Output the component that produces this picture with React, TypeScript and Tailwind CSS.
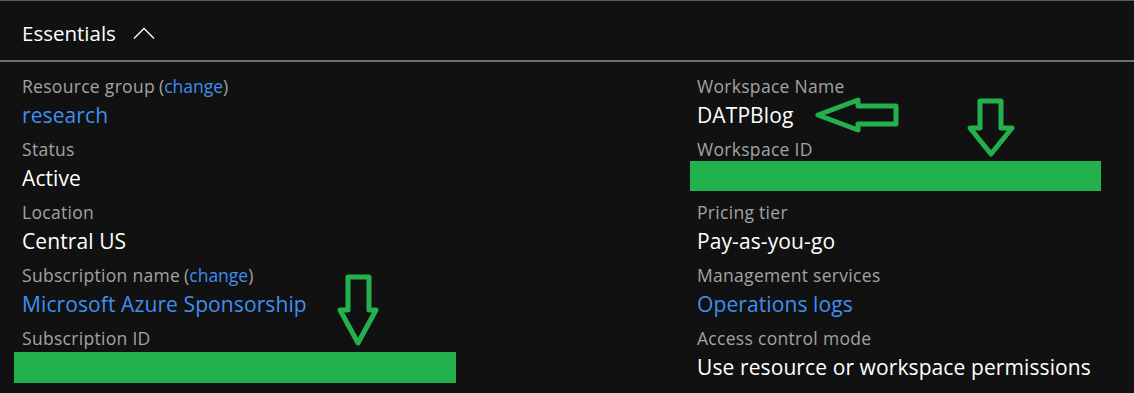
import React from "react";

const font = { fontFamily: '"Open Sans", "Noto Sans", sans-serif' };

function Label({ text, change }: { text: string; change?: boolean }) {
  return (
    <div className="h-[22px] leading-[22px] text-[17.5px] tracking-[0.3px] text-[#a3a3a3] whitespace-nowrap">
      {text}
      {change && (
        <span className="ml-[4px] tracking-[0px]">
          (<span className="text-[#3f8ff0]">change</span>)
        </span>
      )}
    </div>
  );
}

function Value({ text, link }: { text: string; link?: boolean }) {
  return (
    <div
      className={`mt-[4px] mb-[9px] h-[28px] leading-[28px] text-[21px] tracking-[0.1px] whitespace-nowrap ${
        link ? "text-[#3f8ff0]" : "text-white"
      }`}
    >
      {text}
    </div>
  );
}

export default function App() {
  return (
    <div className="relative w-[1134px] h-[393px] overflow-hidden bg-[#111111]" style={font}>
      <div className="h-[1px] bg-[#5c5c5c]" />
      <div className="h-[59px] flex items-center pl-[22px] pt-[5px] gap-[17px]">
        <span className="text-[20.5px] text-white leading-none">Essentials</span>
        <svg width="22" height="12" viewBox="0 0 22 12" className="-mt-[1px]">
          <path d="M1 11.5 L11 1.5 L21 11.5" fill="none" stroke="#ffffff" strokeWidth="1.3" />
        </svg>
      </div>
      <div className="h-[2px] bg-[#6f6f6f]" />
      <div className="grid grid-cols-[697px_1fr] pt-[13px]">
        <div className="pl-[22px]">
          <Label text="Resource group" change />
          <Value text="research" link />
          <Label text="Status" />
          <Value text="Active" />
          <Label text="Location" />
          <Value text="Central US" />
          <Label text="Subscription name" change />
          <Value text="Microsoft Azure Sponsorship" link />
          <Label text="Subscription ID" />
          <div className="mt-[3px] -ml-[8px] w-[442px] h-[31px] bg-[#22b14c]" />
        </div>
        <div>
          <Label text="Workspace Name" />
          <Value text="DATPBlog" />
          <Label text="Workspace ID" />
          <div className="mt-[1px] mb-[10px] -ml-[7px] w-[411px] h-[30px] bg-[#22b14c]" />
          <Label text="Pricing tier" />
          <Value text="Pay-as-you-go" />
          <Label text="Management services" />
          <Value text="Operations logs" link />
          <Label text="Access control mode" />
          <Value text="Use resource or workspace permissions" />
        </div>
      </div>
      <svg
        className="absolute left-0 top-0 pointer-events-none"
        width="1134"
        height="393"
        viewBox="0 0 1134 393"
      >
        <g fill="none" stroke="#22b14c" strokeWidth="5" strokeLinejoin="round">
          <polygon points="818,115 858,100 858,106 896,106 896,124 858,124 858,130" />
          <polygon points="980,101 1001,101 1001,128 1012,128 991,154 970,128 980,128" />
          <polygon points="348,277 369,277 369,310 376,310 358,343 340,310 348,310" />
        </g>
      </svg>
    </div>
  );
}
